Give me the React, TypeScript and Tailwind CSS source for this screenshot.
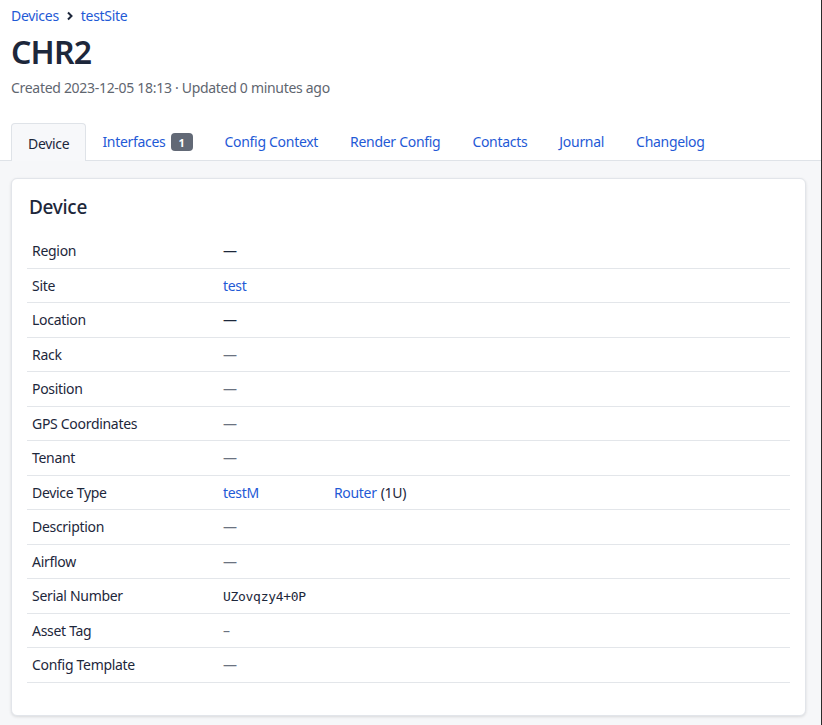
import React from "react";

const font = { fontFamily: '"Noto Sans", "Open Sans", Arial, sans-serif', letterSpacing: "-0.3px" };

type Row = { label: string; value: React.ReactNode };

const Muted = ({ c = "—" }: { c?: string }) => <span className="text-[#6b7280]">{c}</span>;
const Dark = () => <span className="text-[#1d273b]">—</span>;
const Link = ({ children }: { children: React.ReactNode }) => (
  <a className="text-[#1f5ad6] no-underline">{children}</a>
);

const rows: Row[] = [
  { label: "Region", value: <Dark /> },
  { label: "Site", value: <Link>test</Link> },
  { label: "Location", value: <Dark /> },
  { label: "Rack", value: <Muted /> },
  { label: "Position", value: <Muted /> },
  { label: "GPS Coordinates", value: <Muted /> },
  { label: "Tenant", value: <Muted /> },
  {
    label: "Device Type",
    value: (
      <span className="flex items-center">
        <Link>testM</Link>
        <span className="inline-block w-[75px]" />
        <Link>Router</Link>
        <span className="ml-1">(1U)</span>
      </span>
    ),
  },
  { label: "Description", value: <Muted /> },
  { label: "Airflow", value: <Muted /> },
  {
    label: "Serial Number",
    value: (
      <span
        className="text-[13px]"
        style={{ fontFamily: '"DejaVu Sans Mono", "Liberation Mono", monospace', letterSpacing: "-0.3px" }}
      >
        UZovqzy4+0P
      </span>
    ),
  },
  { label: "Asset Tag", value: <Muted c="–" /> },
  { label: "Config Template", value: <Muted /> },
];

const tabs = ["Interfaces", "Config Context", "Render Config", "Contacts", "Journal", "Changelog"];

export default function App() {
  return (
    <div className="w-[822px] h-[725px] flex flex-col bg-white border-r border-[#2b2b2b] text-[#1d273b]" style={font}>
      <div className="px-[11px] pt-[6px]">
        <div className="flex items-center text-[14px] leading-[20px]">
          <a className="text-[#1f5ad6]">Devices</a>
          <svg className="mx-[7px]" width="8" height="10" viewBox="0 0 8 10">
            <path d="M2 1.5 L5.5 5 L2 8.5" fill="none" stroke="#1d273b" strokeWidth="2" />
          </svg>
          <a className="text-[#1f5ad6]">testSite</a>
        </div>
        <h1 className="text-[32px] leading-[40px] font-semibold mt-[6px] tracking-[-0.8px]">CHR2</h1>
        <div className="text-[14px] leading-[20px] text-[#5f6670] mt-[6px]">
          Created 2023-12-05 18:13 · Updated 0 minutes ago
        </div>
      </div>
      <div className="mt-[24px] flex items-end px-[11px] border-b border-[#dfe3e8] text-[14px] leading-[20px]">
        <div className="px-[16px] pt-[2px] h-[38px] flex items-center bg-[#f7f8fa] border border-b-0 border-[#dfe3e8] rounded-t-[4px] -mb-px relative">
          Device
        </div>
        {tabs.map((t) => (
          <div key={t} className="px-[16px] pt-[2px] h-[38px] flex items-center text-[#1f5ad6]">
            {t}
            {t === "Interfaces" && (
              <span className="ml-[5px] bg-[#626976] text-white text-[11px] font-bold leading-none rounded-[4px] w-[22px] h-[18px] flex items-center justify-center">
                1
              </span>
            )}
          </div>
        ))}
      </div>
      <div className="flex-1 bg-[#f6f7f9] px-[11px] pt-[17px]">
        <div className="w-[795px] bg-white border border-[#e2e5ea] rounded-[6px] shadow-[0_1px_3px_rgba(0,0,0,0.12)] px-[15px] pt-[14px] pb-[32px]">
          <h2 className="text-[19px] leading-[28px] font-medium pl-[2px]">Device</h2>
          <div className="mt-[13px] text-[14px]">
            {rows.map((r) => (
              <div key={r.label} className="h-[34.5px] flex items-center border-b border-[#e3e6ea]">
                <div className="w-[196px] pl-[5px]">{r.label}</div>
                <div className="flex-1">{r.value}</div>
              </div>
            ))}
          </div>
        </div>
      </div>
    </div>
  );
}
